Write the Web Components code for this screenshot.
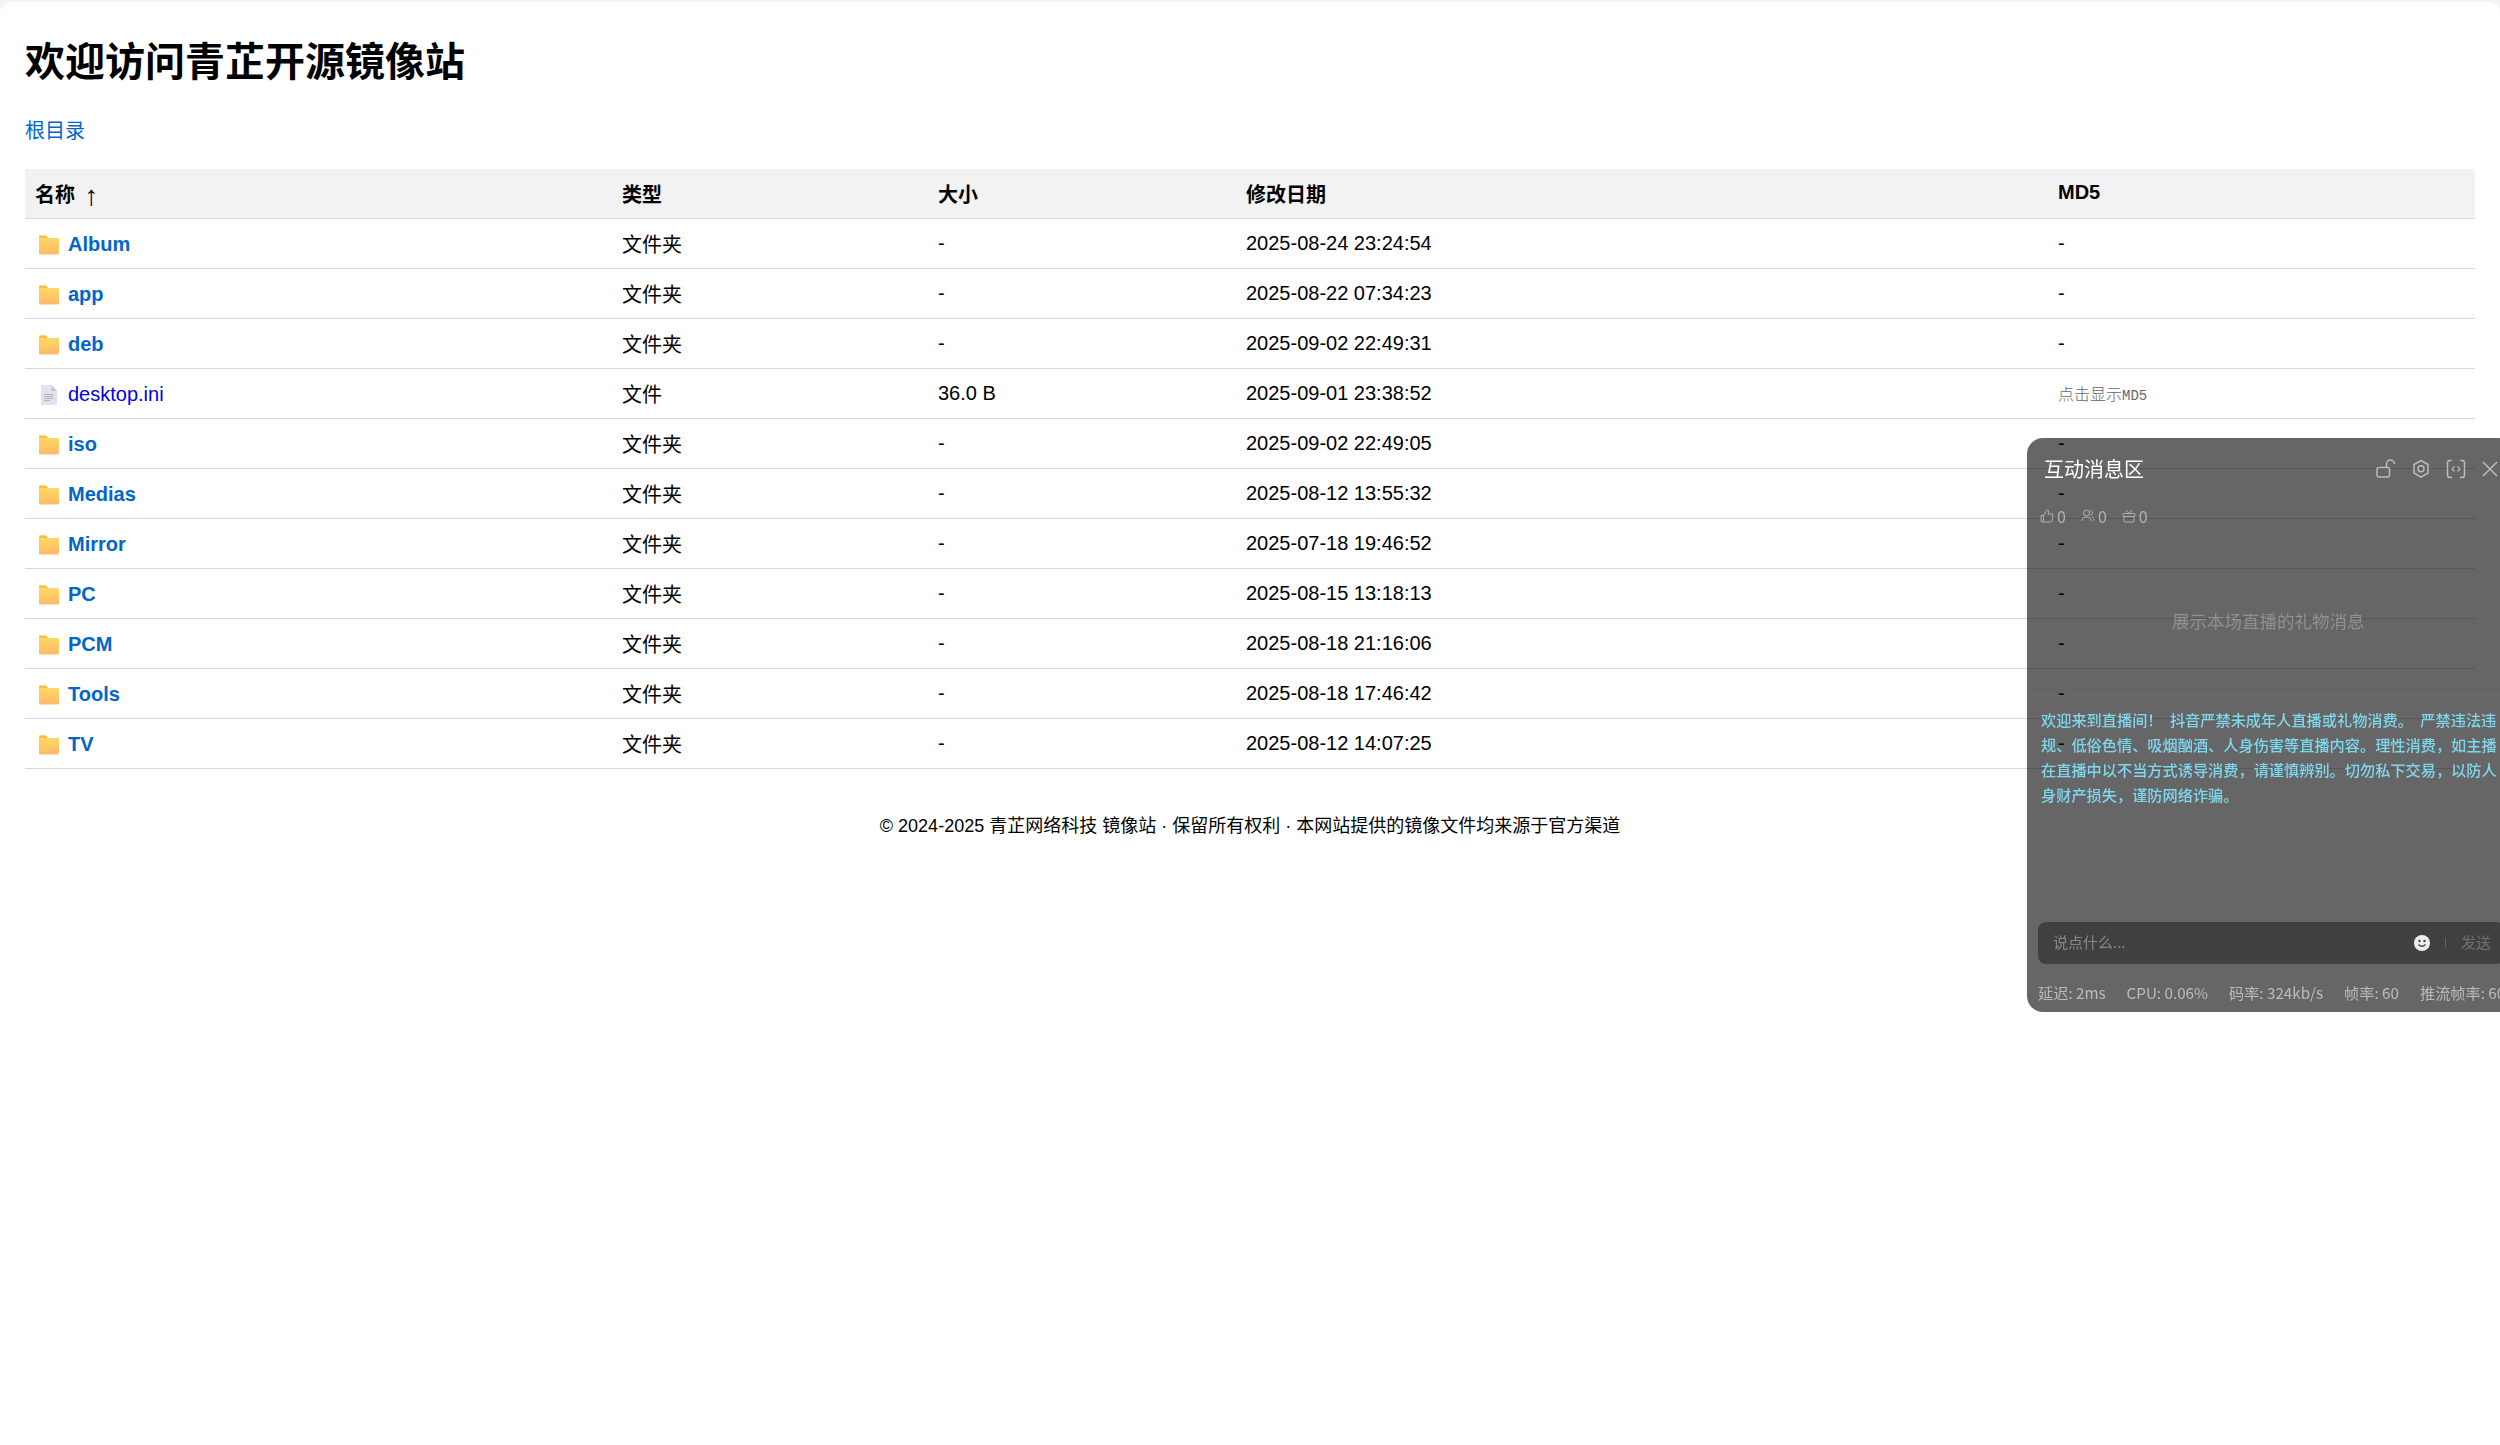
<!DOCTYPE html>
<html lang="zh-CN">
<head>
<meta charset="utf-8">
<title>青芷开源镜像站</title>
<style>
  html, body { margin: 0; height: 100%; overflow: hidden; background: #f4f4f4; }
  body { font-family: "Liberation Sans", "Noto Sans CJK SC", sans-serif; }
</style>
</head>
<body>
<mirror-page>
  <mirror-table></mirror-table>
</mirror-page>
<chat-panel></chat-panel>

<script>
// Icons shared by the listing and the panel
const ICONS = {
  folder: `<svg width="20" height="20" viewBox="0 0 20 20"><defs><linearGradient id="f" x1="0" y1="0" x2="0" y2="1"><stop offset="0" stop-color="#ffdc60"/><stop offset="1" stop-color="#ffba68"/></linearGradient></defs><path d="M0 1.5q0-1 1-1h6l2.2 2.6H19q1 0 1 1V18.500q0 1-1 1H1q-1 0-1-1z" fill="url(#f)"/><path d="M0 1.500q0-1 1-1h6l2.200 2.600H0z" fill="#fdbd4a"/></svg>`,
  file: `<svg width="16" height="20" viewBox="0 0 16 20"><path d="M0 0h10.500L16 6v14H0z" fill="#e6dff0"/><path d="M10.500 0L16 6h-5.500z" fill="#c9c2d3"/><path d="M3 9.500h9M3 11.500h9M3 13.500h9M3 15.500h6" stroke="#b5aec0" stroke-width="1"/></svg>`,
  lock: `<svg width="20" height="20" viewBox="0 0 20 20" fill="none" stroke="currentColor" stroke-width="1.500"><rect x="1" y="8.500" width="12.500" height="9.500" rx="2"/><path d="M10.500 8.500V5a4 4 0 0 1 8 0"/></svg>`,
  hex: `<svg width="18" height="20" viewBox="0 0 18 20" fill="none" stroke="currentColor" stroke-width="1.500"><path d="M9 1.500l7 4v8.500l-7 4.200-7-4.200V5.500z"/><circle cx="9" cy="9.800" r="3"/></svg>`,
  code: `<svg width="20" height="20" viewBox="0 0 20 20" fill="none" stroke="currentColor" stroke-width="1.500"><path d="M6 1.500H4q-2.500 0-2.500 2.500v12q0 2.500 2.500 2.500h2M14 1.500h2q2.500 0 2.500 2.500v12q0 2.500-2.500 2.500h-2"/><path d="M8.500 7.500L6 10l2.500 2.500M11.500 7.500L14 10l-2.500 2.500" stroke-width="1.200"/></svg>`,
  close: `<svg width="16" height="16" viewBox="0 0 16 16" fill="none" stroke="currentColor" stroke-width="1.500"><path d="M1 1l14 14M15 1L1 15"/></svg>`,
  thumb: `<svg width="14" height="14" viewBox="0 0 14 14" fill="none" stroke="currentColor" stroke-width="1"><path d="M1 6.500h2.500v6.500H1.500q-.5 0-.5-.5zM3.500 6.500L7 1q2 0 1.500 2.500L8 5h4q1.500 0 1 1.500L12 12q-.2 1-1.500 1h-7"/></svg>`,
  users: `<svg width="14" height="14" viewBox="0 0 14 14" fill="none" stroke="currentColor" stroke-width="1"><circle cx="5.500" cy="4" r="3"/><path d="M.5 12q.5-4 5-4t5 4M9 1.500q2.500.5 2.500 2.500T9.500 6.500M11 8q2 1 2.500 3.500"/></svg>`,
  gift: `<svg width="14" height="14" viewBox="0 0 14 14" fill="none" stroke="currentColor" stroke-width="1"><rect x="1" y="4.500" width="12" height="3" rx="1"/><path d="M2 7.500v4.500q0 1 1 1h8q1 0 1-1V7.500M4 1l3 3.500L10 1"/></svg>`,
  smile: `<svg width="16" height="16" viewBox="0 0 16 16"><circle cx="8" cy="8" r="8" fill="#eee"/><circle cx="5.500" cy="6" r="1.200" fill="#404040"/><circle cx="10.500" cy="6" r="1.200" fill="#404040"/><path d="M4.500 9.500q3.500 3.500 7 0" fill="none" stroke="#404040" stroke-width="1.300"/></svg>`
};

class MirrorPage extends HTMLElement {
  constructor() {
    super();
    this.attachShadow({ mode: 'open' });
    this.shadowRoot.innerHTML = `
      <style>
        :host {
          display: block;
          margin-top: 2px;
          padding: 35px 25px 0 25px;
          height: 1443px;
          box-sizing: border-box;
          background: #fff;
          border-radius: 12px 12px 0 0;
          color: #000;
        }
        h1 { margin: 0 0 33px 0; font-size: 40px; line-height: 50px; font-weight: 700; }
        .crumb { display: block; font-size: 20px; line-height: 23px; color: #0066cc; margin-bottom: 26px; text-decoration: none; }
        footer { margin-top: 47px; text-align: center; font-size: 18px; line-height: 21px; }
      </style>
      <h1>欢迎访问青芷开源镜像站</h1>
      <a class="crumb" href="#">根目录</a>
      <slot></slot>
      <footer>© 2024-2025 青芷网络科技 镜像站 · 保留所有权利 · 本网站提供的镜像文件均来源于官方渠道</footer>
    `;
  }
}

const ROWS = [
  ['Album', 'dir', '-', '2025-08-24 23:24:54', '-'],
  ['app', 'dir', '-', '2025-08-22 07:34:23', '-'],
  ['deb', 'dir', '-', '2025-09-02 22:49:31', '-'],
  ['desktop.ini', 'file', '36.0 B', '2025-09-01 23:38:52', 'md5'],
  ['iso', 'dir', '-', '2025-09-02 22:49:05', '-'],
  ['Medias', 'dir', '-', '2025-08-12 13:55:32', '-'],
  ['Mirror', 'dir', '-', '2025-07-18 19:46:52', '-'],
  ['PC', 'dir', '-', '2025-08-15 13:18:13', '-'],
  ['PCM', 'dir', '-', '2025-08-18 21:16:06', '-'],
  ['Tools', 'dir', '-', '2025-08-18 17:46:42', '-'],
  ['TV', 'dir', '-', '2025-08-12 14:07:25', '-']
];

class MirrorTable extends HTMLElement {
  constructor() {
    super();
    this.attachShadow({ mode: 'open' });
  }

  connectedCallback() {
    const rows = ROWS.map(([name, kind, size, date, md5]) => `
      <tr>
        <td><span class="name">
          <span class="ico">${kind === 'dir' ? ICONS.folder : ICONS.file}</span>
          <a class="${kind}" href="#">${name}</a>
        </span></td>
        <td>${kind === 'dir' ? '文件夹' : '文件'}</td>
        <td>${size}</td>
        <td>${date}</td>
        <td>${md5 === 'md5' ? '<span class="md5">点击显示<span>MD5</span></span>' : md5}</td>
      </tr>`).join('');

    this.shadowRoot.innerHTML = `
      <style>
        :host { display: block; }
        table { width: 100%; border-collapse: collapse; table-layout: fixed; font-size: 20px; }
        th, td { padding: 0 10px; text-align: left; border-bottom: 1px solid #d9d9d9; height: 50px; box-sizing: border-box; }
        th { background: #f2f2f2; font-weight: 700; height: 49px; }
        th.md5h { padding-bottom: 2px; }
        .arrow { font: 400 28px/20px "Liberation Serif", serif; margin-left: 4px; vertical-align: -3px; }
        .name { display: flex; align-items: center; gap: 9px; padding: 3px 0 0 4px; }
        .ico { display: flex; justify-content: center; width: 20px; flex: none; }
        a { text-decoration: none; }
        a.dir { color: #0066cc; font-weight: 700; }
        a.file { color: #0000ee; }
        .md5 { font-size: 16px; font-weight: 300; color: #666; }
        .md5 span { font: 14px "Liberation Mono", monospace; }
      </style>
      <table>
        <colgroup>
          <col style="width:587px"><col style="width:316px"><col style="width:308px"><col style="width:812px"><col>
        </colgroup>
        <thead>
          <tr><th>名称 <span class="arrow">↑</span></th><th>类型</th><th>大小</th><th>修改日期</th><th class="md5h">MD5</th></tr>
        </thead>
        <tbody>${rows}</tbody>
      </table>
    `;
  }
}

class ChatPanel extends HTMLElement {
  constructor() {
    super();
    this.attachShadow({ mode: 'open' });
    this.shadowRoot.innerHTML = `
      <style>
        :host {
          position: fixed;
          left: 2027px;
          top: 438px;
          width: 488px;
          height: 574px;
          display: flex;
          flex-direction: column;
          box-sizing: border-box;
          background: rgba(0, 0, 0, 0.6);
          border-radius: 16px;
          color: #fff;
          font-family: "Noto Sans CJK SC", "Open Sans", sans-serif;
        }
        .head { display: flex; align-items: center; justify-content: space-between; height: 40px; margin-top: 11px; padding: 0 17px; }
        .title { font-size: 20px; line-height: 28px; }
        .tools { display: flex; align-items: center; gap: 16px; color: #bbb; }
        .stats { display: flex; gap: 15px; padding: 0 13px; margin-top: 15px; height: 24px; color: #b0b0b0; font-size: 16px; align-items: center; }
        .stats span { display: flex; align-items: center; gap: 3px; }
        .gifts { height: 168px; padding-left: 145px; padding-top: 18px; box-sizing: border-box; font-size: 17.500px; color: #909090; display: flex; align-items: center; border-bottom: 1px solid rgba(255,255,255,0.03); }
        .notice { width: 460px; margin: 11px 0 0 14px; font-size: 15.200px; line-height: 25px; font-weight: 500; word-spacing: 4px; color: #7dd7ee; }
        .spacer { flex: 1; }
        .input { display: flex; align-items: center; margin: 0 0 0 11px; height: 42px; width: 466px; box-sizing: border-box; padding: 0 13px 0 15px; border-radius: 8px; background: #404040; font-size: 15px; color: #888; }
        .input .ph { flex: 1; padding-bottom: 3px; }
        .sep { width: 1px; height: 10px; background: #666; margin: 0 15px; }
        .send { color: #707070; font-size: 15px; padding-bottom: 3px; }
        .foot { display: flex; gap: 21px; height: 48px; box-sizing: border-box; align-items: center; padding: 8px 11px 0; font-size: 15.200px; color: #bbb; white-space: nowrap; overflow: hidden; }
      </style>
      <div class="head">
        <div class="title">互动消息区</div>
        <div class="tools">${ICONS.lock}${ICONS.hex}${ICONS.code}${ICONS.close}</div>
      </div>
      <div class="stats">
        <span>${ICONS.thumb}0</span><span>${ICONS.users}0</span><span>${ICONS.gift}0</span>
      </div>
      <div class="gifts">展示本场直播的礼物消息</div>
      <div class="notice">欢迎来到直播间！ 抖音严禁未成年人直播或礼物消费。 严禁违法违规、低俗色情、吸烟酗酒、人身伤害等直播内容。理性消费，如主播在直播中以不当方式诱导消费，请谨慎辨别。切勿私下交易，以防人身财产损失，谨防网络诈骗。</div>
      <div class="spacer"></div>
      <div class="input">
        <span class="ph">说点什么...</span>
        ${ICONS.smile}
        <span class="sep"></span>
        <span class="send">发送</span>
      </div>
      <div class="foot">
        <span>延迟: 2ms</span><span>CPU: 0.06%</span><span>码率: 324kb/s</span><span>帧率: 60</span><span>推流帧率: 60</span>
      </div>
    `;
  }
}

customElements.define('mirror-page', MirrorPage);
customElements.define('mirror-table', MirrorTable);
customElements.define('chat-panel', ChatPanel);
</script>
</body>
</html>
